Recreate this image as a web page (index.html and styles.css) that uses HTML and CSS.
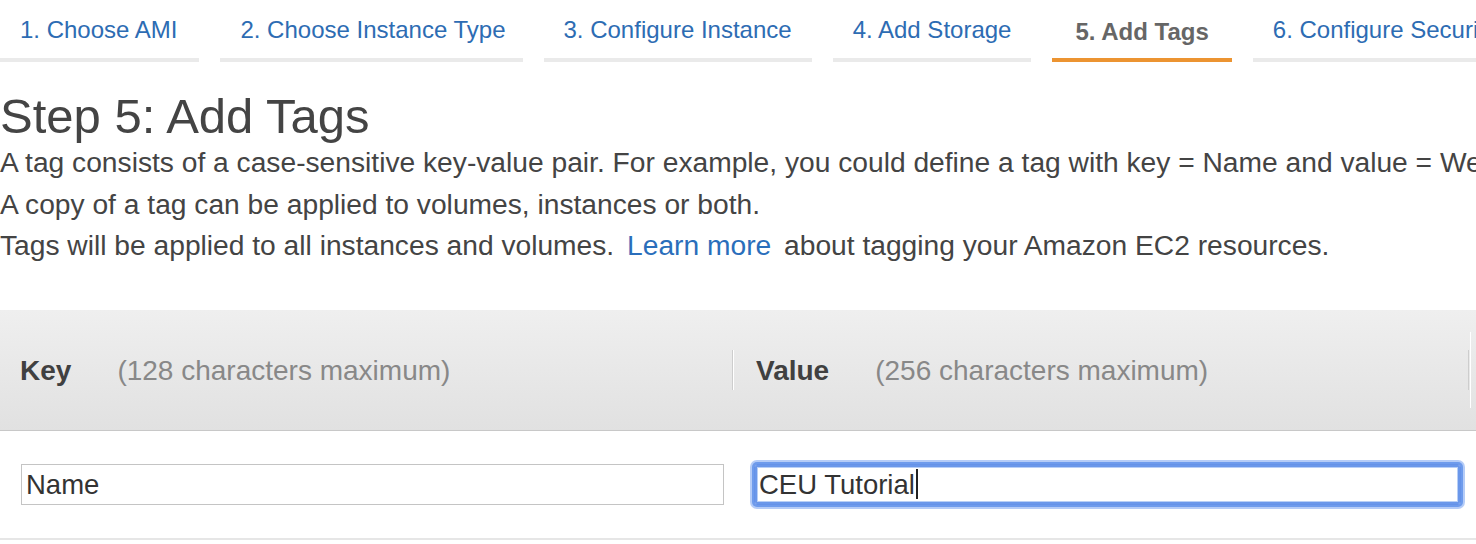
FILE: index.html
```html
<!DOCTYPE html>
<html lang="en">
<head>
<meta charset="utf-8">
<title>Step 5: Add Tags</title>
<link rel="stylesheet" href="styles.css">
</head>
<body>
  <nav class="tabs">
    <a class="tab tab-first">1. Choose AMI</a>
    <a class="tab tab-tight">2. Choose Instance Type</a>
    <a class="tab">3. Configure Instance</a>
    <a class="tab">4. Add Storage</a>
    <a class="tab tab-active">5. Add Tags</a>
    <a class="tab">6. Configure Security Group</a>
    <a class="tab">7. Review</a>
  </nav>

  <h1 class="title">Step 5: Add Tags</h1>
  <div class="intro">
    <div class="line">A tag consists of a case-sensitive key-value pair. For example, you could define a tag with key = Name and value = Webserver.</div>
    <div class="line">A copy of a tag can be applied to volumes, instances or both.</div>
    <div class="line">Tags will be applied to all instances and volumes. <a class="link">Learn more</a> about tagging your Amazon EC2 resources.</div>
  </div>

  <section class="table">
    <div class="thead">
      <div class="hcell hcell-key"><span class="hlabel">Key</span><span class="hnote">(128 characters maximum)</span></div>
      <div class="sep"></div>
      <div class="hcell hcell-value"><span class="hlabel">Value</span><span class="hnote">(256 characters maximum)</span></div>
      <div class="sep sep-long"></div>
      <div class="hcell"></div>
    </div>
    <div class="trow">
      <div class="cell cell-key"><div class="field">Name</div></div>
      <div class="cell cell-value"><div class="field field-focus">CEU Tutorial<span class="caret"></span></div></div>
      <div class="cell"></div>
    </div>
  </section>
</body>
</html>
```

FILE: styles.css
```css
html, body {
  margin: 0;
  padding: 0;
  background: #fff;
}

body {
  font-family: "Liberation Sans", Arial, Helvetica, sans-serif;
  color: #444;
  overflow: hidden;
  width: 1476px;
}

/* ---------- wizard tabs ---------- */
.tabs {
  display: flex;
  gap: 21px;
  white-space: nowrap;
  overflow: hidden;
  height: 62px;
}

.tab {
  flex: none;
  box-sizing: border-box;
  height: 62px;
  padding: 16px 20px 0;
  font-size: 24px;
  line-height: 28px;
  color: #2d6cb3;
  border-bottom: 4px solid #eaeaea;
  text-decoration: none;
}

.tab-first {
  padding-right: 22px;
}

.tab-tight {
  padding-right: 17px;
}

.tab-active {
  padding-top: 18px;
  padding-left: 23px;
  padding-right: 23px;
  font-weight: bold;
  color: #666;
  border-bottom-color: #ec9431;
}

/* ---------- heading ---------- */
.title {
  margin: 28px 0 0;
  font-size: 49px;
  line-height: 52px;
  font-weight: normal;
  color: #444;
}

.intro {
  font-size: 28.2px;
  line-height: 41.5px;
  white-space: nowrap;
}

.link {
  color: #2a6ebb;
  margin: 0 5px 0 5px;
  text-decoration: none;
}

/* ---------- tag table ---------- */
.table {
  margin-top: 43px;
}

.thead {
  display: grid;
  grid-template-columns: 732px 2px 734px 2px 1fr;
  align-items: center;
  height: 120px;
  background: linear-gradient(#efefef, #e1e1e1);
  border-bottom: 1px solid #c8c8c8;
}

.hcell {
  display: flex;
  align-items: baseline;
  padding-left: 20px;
  padding-top: 3px;
  white-space: nowrap;
  font-size: 28px;
}

.hcell-value {
  padding-left: 22px;
}

.hlabel {
  font-weight: bold;
  color: #404040;
}

.hnote {
  margin-left: 46px;
  color: #888;
}

.sep {
  width: 1px;
  height: 40px;
  background: #cdcdcd;
  box-shadow: 1px 0 0 #fff;
}

.sep-long {
  box-shadow: 2px 0 0 #fff, 2px -18px 0 #fff, 2px 18px 0 #fff;
}

.trow {
  display: grid;
  grid-template-columns: 734px 736px 1fr;
  align-items: center;
  height: 107px;
  border-bottom: 2px solid #e6e6e6;
}

.cell-key {
  padding: 0 10px 0 21px;
}

.cell-value {
  padding: 0 9px 0 20px;
}

.field {
  box-sizing: border-box;
  height: 41px;
  padding: 0 4px;
  border: 1px solid #c4c4c4;
  background: #fff;
  font-size: 27.5px;
  line-height: 39px;
  color: #333;
  white-space: nowrap;
  display: flex;
  align-items: center;
}

.field-focus {
  border-color: #6592e8;
  border-radius: 3px;
  box-shadow:
    inset 0 0 0 2px #6a97ea,
    inset 0 0 0 3px #b8cff6,
    0 0 0 2px #6e9bec,
    0 0 0 4px rgba(120, 163, 240, 0.55);
}

.caret {
  display: inline-block;
  width: 2px;
  height: 30px;
  margin-left: 1px;
  background: #222;
}
```
